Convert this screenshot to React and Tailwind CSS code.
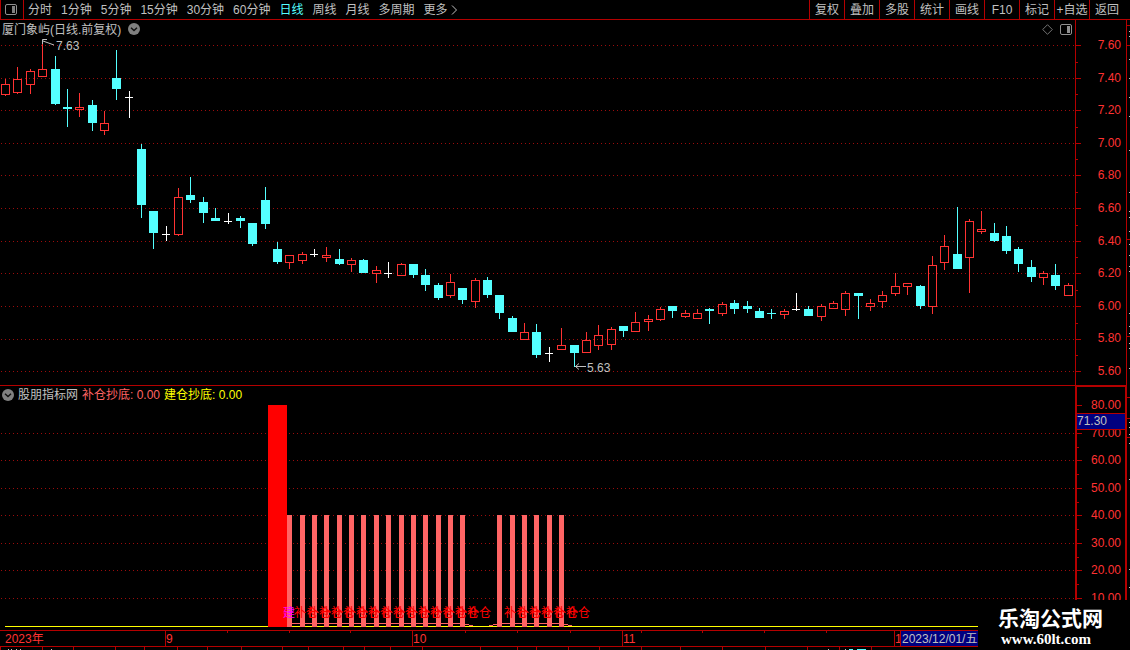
import React from "react";

const PERIODS = ["分时", "1分钟", "5分钟", "15分钟", "30分钟", "60分钟", "日线", "周线", "月线", "多周期"];
const ACTIONS = ["复权", "叠加", "多股", "统计", "画线", "F10", "标记", "+自选", "返回"];

const PRICES = ["7.60", "7.40", "7.20", "7.00", "6.80", "6.60", "6.40", "6.20", "6.00", "5.80", "5.60"];
const PRICE_ROWS = [45, 78, 110, 143, 175, 208, 241, 273, 306, 339, 371];
const PRICE_HALF_ROWS = [62, 94, 127, 159, 192, 225, 257, 290, 323, 355];

const LEVELS = ["80.00", "70.00", "60.00", "50.00", "40.00", "30.00", "20.00", "10.00"];
const LEVEL_ROWS = [405, 433, 460, 488, 515, 543, 570, 598];
const LEVEL_HALF_ROWS = [419, 447, 474, 502, 529, 557, 584];

// x, kind (r = rising, c = falling, w = unchanged), high, body top, body bottom, low
const CANDLES = [
  [5, "r", 79, 84, 95, 96], [17, "r", 67, 79, 93, 94], [30, "r", 69, 71, 85, 94], [42, "r", 43, 69, 77, 77],
  [55, "c", 56, 69, 104, 105], [67, "c", 89, 107, 109, 127], [79, "r", 93, 107, 110, 117], [92, "c", 100, 105, 123, 131],
  [104, "r", 111, 123, 131, 135], [116, "c", 50, 78, 89, 100], [129, "w", 91, 97, 98, 118], [141, "c", 144, 149, 205, 218],
  [153, "c", 211, 211, 233, 249], [166, "w", 226, 234, 235, 241], [178, "r", 188, 197, 235, 236], [190, "c", 177, 195, 200, 203],
  [203, "c", 197, 202, 213, 223], [215, "c", 208, 218, 221, 221], [228, "w", 213, 221, 222, 224], [240, "c", 216, 218, 221, 228],
  [252, "c", 223, 223, 244, 246], [265, "c", 187, 200, 224, 229], [277, "c", 242, 249, 262, 264], [289, "r", 255, 255, 263, 269],
  [302, "r", 252, 254, 261, 264], [314, "w", 249, 254, 255, 257], [326, "r", 247, 255, 258, 262], [339, "c", 249, 259, 264, 265],
  [351, "r", 258, 260, 265, 272], [363, "c", 259, 260, 273, 273], [376, "r", 266, 270, 274, 283], [388, "w", 262, 273, 274, 278],
  [401, "r", 263, 264, 276, 276], [413, "c", 264, 264, 275, 278], [425, "c", 269, 275, 285, 291], [438, "c", 283, 285, 298, 300],
  [450, "r", 274, 282, 296, 298], [462, "c", 288, 288, 300, 304], [475, "r", 278, 280, 302, 308], [487, "c", 277, 280, 295, 298],
  [499, "c", 295, 295, 313, 319], [512, "c", 316, 318, 332, 332], [524, "r", 323, 332, 340, 340], [536, "c", 324, 332, 355, 358],
  [549, "w", 347, 353, 354, 362], [561, "r", 328, 345, 350, 350], [574, "c", 345, 345, 353, 367], [586, "r", 332, 340, 353, 353],
  [598, "r", 325, 335, 346, 350], [611, "r", 327, 329, 345, 350], [623, "c", 326, 326, 331, 337], [635, "r", 312, 322, 332, 332],
  [648, "r", 315, 319, 322, 331], [660, "r", 307, 309, 320, 321], [672, "c", 306, 306, 311, 318], [685, "r", 310, 313, 317, 318],
  [697, "r", 309, 313, 319, 319], [709, "c", 308, 309, 311, 324], [722, "r", 302, 304, 314, 316], [734, "c", 300, 303, 309, 314],
  [747, "c", 301, 306, 309, 313], [759, "c", 308, 311, 318, 318], [771, "c", 309, 313, 314, 319], [784, "r", 309, 311, 315, 319],
  [796, "w", 293, 309, 310, 311], [808, "c", 306, 309, 316, 316], [821, "r", 304, 306, 317, 321], [833, "r", 301, 303, 309, 309],
  [845, "r", 291, 293, 310, 316], [858, "c", 293, 293, 296, 319], [870, "r", 299, 303, 307, 311], [882, "r", 291, 295, 302, 308],
  [895, "r", 273, 286, 294, 296], [907, "r", 283, 283, 287, 295], [920, "c", 285, 286, 306, 309], [932, "r", 256, 265, 307, 314],
  [944, "r", 235, 246, 263, 270], [957, "c", 207, 254, 269, 269], [969, "r", 219, 221, 258, 293], [981, "r", 211, 229, 232, 234],
  [994, "c", 223, 233, 241, 242], [1006, "c", 226, 236, 251, 254], [1018, "c", 247, 249, 264, 272], [1031, "c", 260, 267, 277, 282],
  [1043, "r", 271, 273, 278, 285], [1055, "c", 264, 275, 286, 290], [1068, "r", 283, 285, 296, 296],
];

const BARS = [287, 300, 312, 324, 337, 349, 361, 374, 386, 399, 411, 423, 436, 448, 460, 497, 510, 522, 534, 547, 559];
const BASE_STEPS = [
  [292, 623, 173], [465, 624, 4], [469, 625, 4],
  [489, 625, 4], [493, 624, 4], [497, 623, 67], [564, 624, 4], [568, 625, 4],
];

const WEEK_TICKS = [227, 289, 350, 465, 517, 570, 641, 702, 764, 826];
const MONTH_TICKS = [165, 412, 622, 894, 900];
const FOOT_TICKS = [0, 42, 73, 115, 144, 177, 207, 241, 282, 308, 343, 364, 390, 422, 480, 517, 536, 568, 599, 641, 680, 722, 765, 807, 839, 871];
const EDGE_MARKS = [31, 36, 59, 78, 97, 116, 150, 192, 211, 217, 231, 244, 255, 266, 271, 313, 326, 333, 343, 348, 368, 422, 427, 434, 443, 479, 569, 587];

function Candle({ data }) {
  const [x, kind, high, top, bottom, low] = data;
  if (kind === "c") {
    return (
      <g fill="#54ffff">
        <rect x={x} y={high} width="1" height={low - high} />
        <rect x={x - 4} y={top} width="9" height={bottom - top} />
      </g>
    );
  }
  if (kind === "w") {
    return (
      <g fill="#ffffff">
        <rect x={x} y={high} width="1" height={low - high} />
        <rect x={x - 4} y={top} width="8" height="1" />
      </g>
    );
  }
  return (
    <g fill="#ff3232">
      <rect x={x} y={high} width="1" height={top - high} />
      <rect x={x} y={bottom} width="1" height={low - bottom} />
      <rect x={x - 4} y={top} width="9" height="1" />
      <rect x={x - 4} y={bottom - 1} width="9" height="1" />
      <rect x={x - 4} y={top} width="1" height={bottom - top} />
      <rect x={x + 4} y={top} width="1" height={bottom - top} />
    </g>
  );
}

function GridRows({ id, rows }) {
  return (
    <g>
      <defs>
        <pattern id={id} width="4" height="1" patternUnits="userSpaceOnUse">
          <rect x="1" y="0" width="1" height="1" fill="#9c0c0c" />
        </pattern>
      </defs>
      {rows.map((y) => (
        <rect key={y} x="0" y={y} width="100%" height="1" fill={`url(#${id})`} />
      ))}
    </g>
  );
}

function AxisTicks({ rows, halfRows, top, className }) {
  return (
    <svg className={className} shapeRendering="crispEdges" aria-hidden="true">
      <g transform={`translate(0 ${-top})`} fill="#b40000">
        {rows.map((y) => <rect key={y} x="0" y={y} width="5" height="1" />)}
        {halfRows.map((y) => <rect key={y} x="0" y={y} width="2" height="1" />)}
      </g>
    </svg>
  );
}

function ChevronButton({ label }) {
  return (
    <button type="button" aria-label={label} className="flex">
      <svg className="size-3" viewBox="0 0 12 12" aria-hidden="true">
        <circle cx="6" cy="6" r="6" fill="#808080" />
        <path d="M3 4.7 6 7.5 9 4.7" fill="none" stroke="#101010" strokeWidth="1.4" />
      </svg>
    </button>
  );
}

function PanelIcon({ filled }) {
  return (
    <svg className="h-[11px] w-3" viewBox="0 0 12 11" aria-hidden="true">
      <rect x=".5" y=".5" width="11" height="10" rx="1.5" fill="none" stroke="#909090" />
      <rect x="7" y="2" width="3" height="7" fill={filled} />
    </svg>
  );
}

function Toolbar() {
  return (
    <header className="flex h-5 border-b border-[#b40000]">
      <button type="button" aria-label="侧栏" className="flex w-6 shrink-0 items-center border-x border-[#b40000] pl-1">
        <PanelIcon filled="#808080" />
      </button>
      <nav className="ml-1 flex flex-1 items-center gap-[9px] overflow-hidden whitespace-nowrap">
        {PERIODS.map((p) => (
          <button key={p} type="button" className={p === "日线" ? "text-[#54ffff]" : ""}>{p}</button>
        ))}
        <button type="button" className="flex items-center gap-[2px]">
          更多
          <svg className="h-3 w-2" viewBox="0 0 8 12" aria-hidden="true">
            <path d="M2 1.5 6.5 6 2 10.5" fill="none" stroke="#c0c0c0" />
          </svg>
        </button>
      </nav>
      <div className="mr-[6px] flex shrink-0 whitespace-nowrap">
        {ACTIONS.map((a) => (
          <button key={a} type="button" className="w-[35px] border-l border-[#b40000] text-center">{a}</button>
        ))}
      </div>
    </header>
  );
}

function PriceChart() {
  return (
    <section className="min-w-0 flex-1">
      <div className="flex h-[18px] items-center pr-[3px] pl-[2px]">
        <h1 className="mr-[7px] pt-[2px] whitespace-nowrap">厦门象屿(日线.前复权)</h1>
        <ChevronButton label="股票选项" />
        <div className="ml-auto flex items-center gap-[7px]">
          <svg className="size-[11px]" viewBox="0 0 11 11" aria-hidden="true">
            <path d="M5.5 .7 10.3 5.5 5.5 10.3 .7 5.5Z" fill="none" stroke="#808080" strokeWidth=".9" />
          </svg>
          <PanelIcon filled="#909090" />
        </div>
      </div>
      <svg className="block h-[347px] w-full" shapeRendering="crispEdges" role="img" aria-label="日线走势">
        <g transform="translate(0 -38)">
          <GridRows id="price-dots" rows={PRICE_ROWS} />
          {CANDLES.map((c) => <Candle key={c[0]} data={c} />)}
          <g fill="none" stroke="#c0c0c0" shapeRendering="auto">
            <path d="M54 45 43 41M47 39.500H42.500V44" />
            <path d="M586 366.500H575M579 363.500 575.500 366.500 579 369.500" />
          </g>
          <g fill="#c0c0c0">
            <text x="56" y="50">7.63</text>
            <text x="587" y="372">5.63</text>
          </g>
        </g>
      </svg>
    </section>
  );
}

function SignalChart() {
  return (
    <section className="min-w-0 flex-1 border-t border-[#b40000]">
      <div className="flex h-[17px] items-center gap-[4px] pl-[2px] whitespace-nowrap">
        <ChevronButton label="指标选项" />
        <h2>股朋指标网</h2>
        <span className="text-[#ff6464]">补仓抄底: 0.00</span>
        <span className="text-[#ffff00]">建仓抄底: 0.00</span>
      </div>
      <svg className="block h-[227px] w-full" shapeRendering="crispEdges" role="img" aria-label="抄底信号">
        <g transform="translate(0 -403)">
          <GridRows id="signal-dots" rows={LEVEL_ROWS.slice(1)} />
          <rect x="5" y="626" width="100%" height="1" fill="#ffff00" />
          <rect x="268" y="405" width="19" height="222" fill="#ff0000" />
          <g fill="#ff6464">
            {BARS.map((x) => <rect key={x} x={x} y="515" width="5" height="112" />)}
            {BASE_STEPS.map(([x, y, w]) => <rect key={x} x={x} y={y} width={w} height="1" />)}
          </g>
          <text x="283" y="617" fill="#ff00ff">建</text>
          <g fill="#ff0000">
            {BARS.map((x) => <text key={x} x={x + 7} y="617">补仓</text>)}
          </g>
        </g>
      </svg>
    </section>
  );
}

function DateBar() {
  return (
    <div className="border-t border-[#b40000] text-[#ff3232]">
      <svg className="block h-[2px] w-full" shapeRendering="crispEdges" aria-hidden="true">
        <rect x="901" y="0" width="77" height="2" fill="#000080" />
        <g fill="#b40000">
          {[...WEEK_TICKS, ...MONTH_TICKS].map((x) => <rect key={x} x={x} y="0" width="1" height="2" />)}
        </g>
      </svg>
      <div className="flex h-[13px] leading-[13px] whitespace-nowrap">
        <span className="w-[165px] shrink-0 pl-[5px]">2023年</span>
        <span className="w-[247px] shrink-0 border-l border-[#b40000]">9</span>
        <span className="w-[210px] shrink-0 border-l border-[#b40000]">10</span>
        <span className="w-[272px] shrink-0 border-l border-[#b40000]">11</span>
        <span className="w-[6px] shrink-0 border-l border-[#b40000]">1</span>
        <span className="w-[78px] shrink-0 border-l border-[#b40000] bg-[#000080] pl-px text-[#c0c0c0]">2023/12/01/五</span>
      </div>
      <svg className="block h-1 w-full" shapeRendering="crispEdges" aria-hidden="true">
        <g fill="#b40000">
          <rect x="0" y="0" width="100%" height="1" />
          {FOOT_TICKS.map((x) => <rect key={x} x={x} y="1" width="1" height="3" />)}
        </g>
        <g fill="#c0c0c0">
          {[8, 11, 16, 20, 51, 828, 845].map((x) => <rect key={x} x={x} y="3" width="1" height="1" />)}
        </g>
        <rect x="849" y="3" width="4" height="1" fill="#54ffff" />
        <rect x="857" y="3" width="9" height="1" fill="#54ffff" />
      </svg>
    </div>
  );
}

export default function App() {
  return (
    <div className="relative flex min-h-screen flex-col overflow-hidden bg-black font-['Liberation_Sans','Noto_Sans_CJK_SC',sans-serif] text-[12px] leading-4 text-[#c0c0c0]">
      <Toolbar />
      <div className="flex">
        <div className="min-w-0 flex-1">
          <div className="flex">
            <PriceChart />
            <div className="flex w-[52px] shrink-0 border-x border-[#b40000]">
              <AxisTicks rows={PRICE_ROWS} halfRows={PRICE_HALF_ROWS} top={20} className="w-[6px] shrink-0" />
              <div className="flex flex-1 flex-col justify-between pt-[17px] pr-[5px] pb-[6px] text-right text-[#ff3232]">
                {PRICES.map((p) => <span key={p}>{p}</span>)}
              </div>
            </div>
          </div>
          <div className="flex">
            <SignalChart />
            <div className="relative flex w-[52px] shrink-0 border-2 border-b-0 border-[#b40000]">
              <AxisTicks rows={LEVEL_ROWS} halfRows={LEVEL_HALF_ROWS} top={387} className="w-[5px] shrink-0" />
              <div className="mt-[10px] flex h-[209px] flex-1 flex-col justify-between pr-1 text-right text-[#ff3232]">
                {LEVELS.map((l) => <span key={l}>{l}</span>)}
              </div>
              <output className="absolute inset-x-0 top-[26px] h-[17px] border-y border-[#b40000] bg-[#000080] leading-[15px]">71.30</output>
            </div>
          </div>
        </div>
        <svg className="w-[3px] shrink-0" shapeRendering="crispEdges" aria-hidden="true">
          <g transform="translate(0 -20)">
            {[25, 45, 239, 336, 397, 418, 437].map((y) => <rect key={y} x="0" y={y} width="3" height="1" fill="#b40000" />)}
            {EDGE_MARKS.map((y) => <rect key={y} x="2" y={y} width="1" height="1" fill="#c0c0c0" />)}
          </g>
        </svg>
      </div>
      <DateBar />
      <a href="#home" className="absolute right-0 bottom-0 flex h-[50px] w-[152px] flex-col items-start bg-black pt-[7px] pl-5 font-bold text-white">
        <span className="text-[21px] leading-6">乐淘公式网</span>
        <span className="pl-[3px] font-['Liberation_Serif',serif] text-[15px] leading-4">www.60lt.com</span>
      </a>
    </div>
  );
}
